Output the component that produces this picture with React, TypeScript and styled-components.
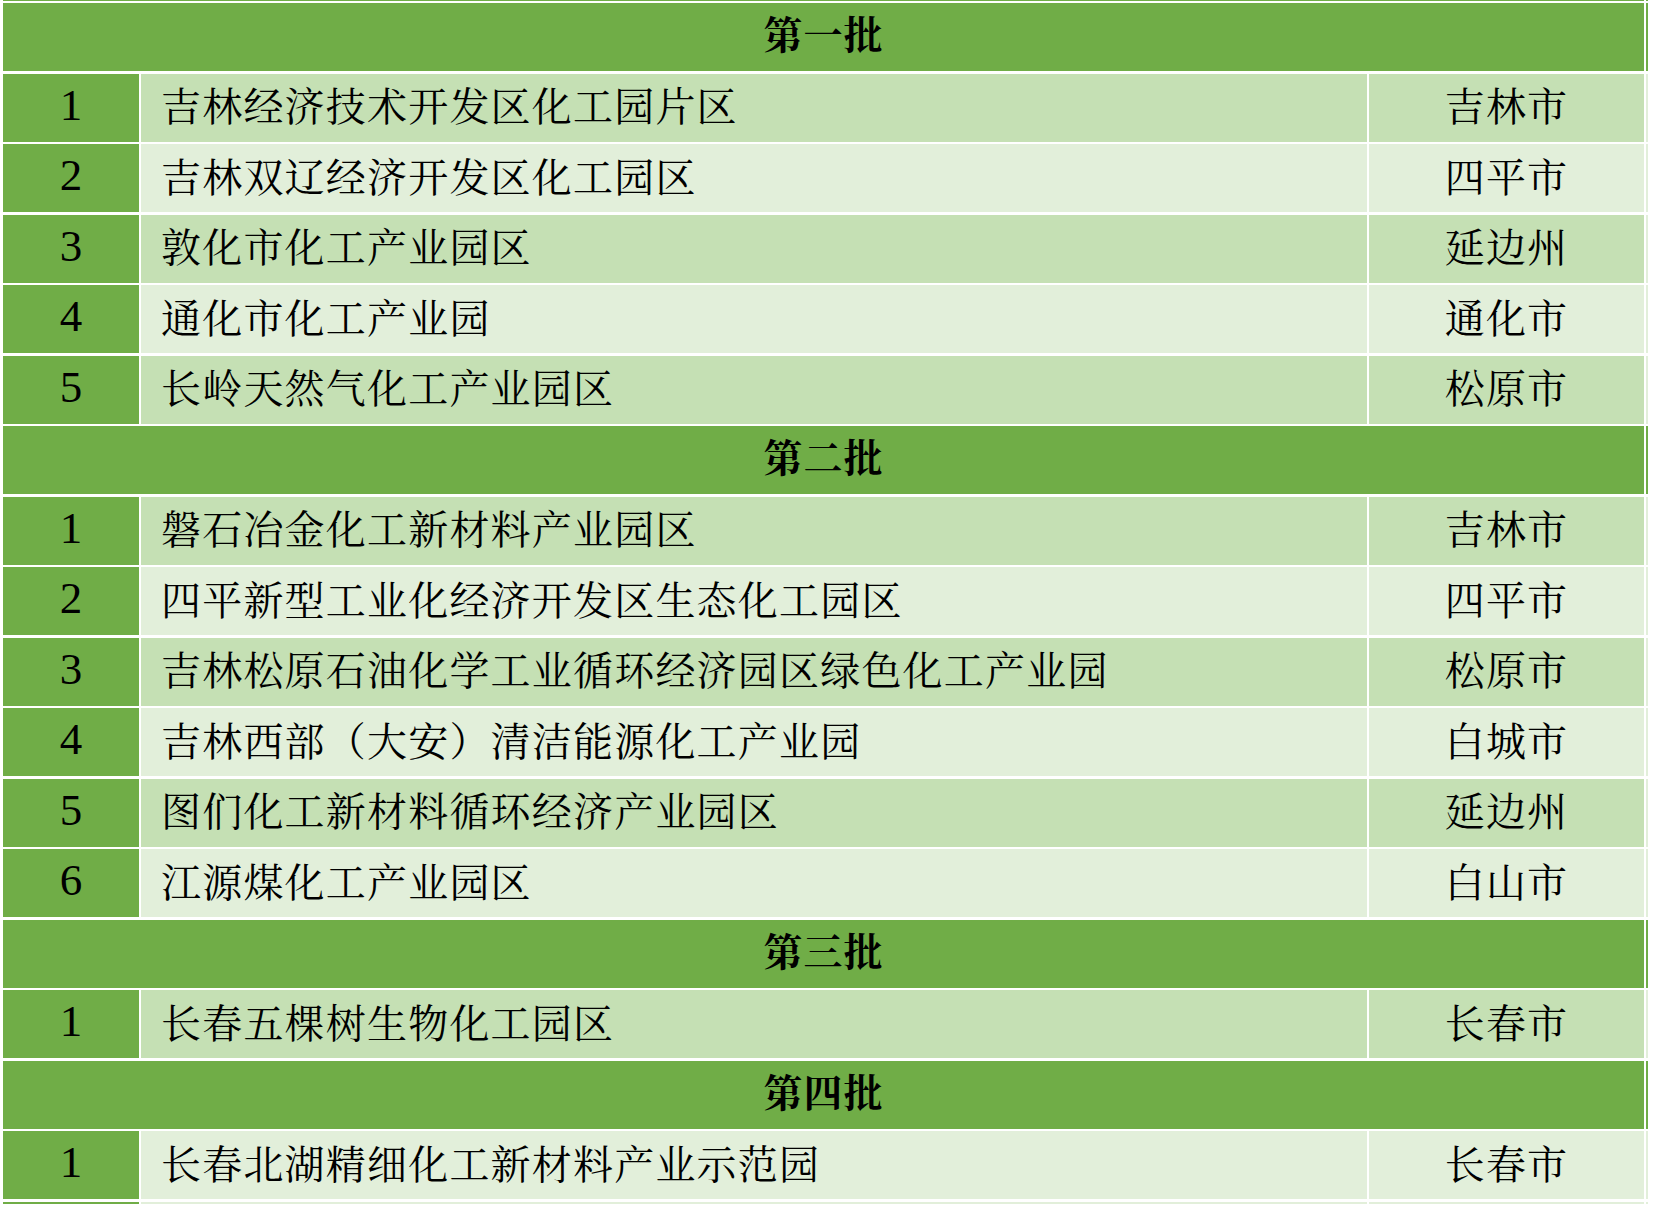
import React from "react";
import styled, { createGlobalStyle } from "styled-components";

const GlobalStyle = createGlobalStyle`
  html, body {
    margin: 0;
    padding: 0;
    background: #ffffff;
  }
  body {
    font-family: "Liberation Serif", "Noto Serif CJK SC", "Noto Sans CJK SC", serif;
    color: #000000;
  }
`;

// *Colores de la tabla (verde tipo Excel)
const GREEN = "#70ad47";
const DARK = "#c5e0b4";
const LIGHT = "#e2efda";

type Tone = "dark" | "light";

const Page = styled.div`
  width: 1655px;
  height: 1212px;
  overflow: hidden;
  background: #ffffff;
`;

const Sheet = styled.div`
  display: grid;
  grid-template-columns: 136px 1226px 275px 1.5px;
  grid-template-rows: 1px;
  grid-auto-rows: 68.2px;
  column-gap: 2px;
  row-gap: 2.3px;
  padding-left: 3px;
`;

const BatchCell = styled.div`
  grid-column: 1 / 4;
  background: ${GREEN};
  display: flex;
  justify-content: center;
  align-items: center;
  padding-bottom: 10px;
  box-sizing: border-box;
  font-weight: 700;
  font-size: 39px;
  letter-spacing: 1px;
`;

const IndexCell = styled.div`
  background: ${GREEN};
  display: flex;
  justify-content: center;
  align-items: center;
  padding-bottom: 6px;
  box-sizing: border-box;
  font-family: "Liberation Serif", serif;
  font-size: 45px;
`;

const NameCell = styled.div<{ $tone: Tone }>`
  background: ${(p) => (p.$tone === "dark" ? DARK : LIGHT)};
  display: flex;
  align-items: center;
  padding: 0 0 8px 20px;
  box-sizing: border-box;
  font-size: 40px;
  letter-spacing: 1.2px;
  white-space: nowrap;
`;

const CityCell = styled(NameCell)`
  justify-content: center;
  padding: 0 0 8px 0;
`;

const EdgeCell = styled.div<{ $head?: boolean }>`
  background: ${(p) => (p.$head ? GREEN : LIGHT)};
`;

// filas cortadas (arriba y abajo de la captura)
const TopCut = styled.div`
  grid-column: 1 / 4;
  background: ${GREEN};
`;

const BottomCut = styled.div<{ $first?: boolean }>`
  background: ${(p) => (p.$first ? GREEN : LIGHT)};
  height: 2px;
`;

interface Park {
  name: string;
  city: string;
  tone: Tone;
}

interface Batch {
  title: string;
  parks: Park[];
}

const batches: Batch[] = [
  {
    title: "第一批",
    parks: [
      { name: "吉林经济技术开发区化工园片区", city: "吉林市", tone: "dark" },
      { name: "吉林双辽经济开发区化工园区", city: "四平市", tone: "light" },
      { name: "敦化市化工产业园区", city: "延边州", tone: "dark" },
      { name: "通化市化工产业园", city: "通化市", tone: "light" },
      { name: "长岭天然气化工产业园区", city: "松原市", tone: "dark" },
    ],
  },
  {
    title: "第二批",
    parks: [
      { name: "磐石冶金化工新材料产业园区", city: "吉林市", tone: "dark" },
      { name: "四平新型工业化经济开发区生态化工园区", city: "四平市", tone: "light" },
      { name: "吉林松原石油化学工业循环经济园区绿色化工产业园", city: "松原市", tone: "dark" },
      { name: "吉林西部（大安）清洁能源化工产业园", city: "白城市", tone: "light" },
      { name: "图们化工新材料循环经济产业园区", city: "延边州", tone: "dark" },
      { name: "江源煤化工产业园区", city: "白山市", tone: "light" },
    ],
  },
  {
    title: "第三批",
    parks: [{ name: "长春五棵树生物化工园区", city: "长春市", tone: "dark" }],
  },
  {
    title: "第四批",
    parks: [{ name: "长春北湖精细化工新材料产业示范园", city: "长春市", tone: "light" }],
  },
];

const App = () => {
  return (
    <Page>
      <GlobalStyle />
      <Sheet>
        <TopCut />
        <EdgeCell $head />
        {batches.map((b) => (
          <React.Fragment key={b.title}>
            <BatchCell>{b.title}</BatchCell>
            <EdgeCell $head />
            {b.parks.map((p, i) => (
              <React.Fragment key={p.name}>
                <IndexCell>{i + 1}</IndexCell>
                <NameCell $tone={p.tone}>{p.name}</NameCell>
                <CityCell $tone={p.tone}>{p.city}</CityCell>
                <EdgeCell />
              </React.Fragment>
            ))}
          </React.Fragment>
        ))}
        <BottomCut $first />
        <BottomCut />
        <BottomCut />
        <BottomCut />
      </Sheet>
    </Page>
  );
};

export default App;
